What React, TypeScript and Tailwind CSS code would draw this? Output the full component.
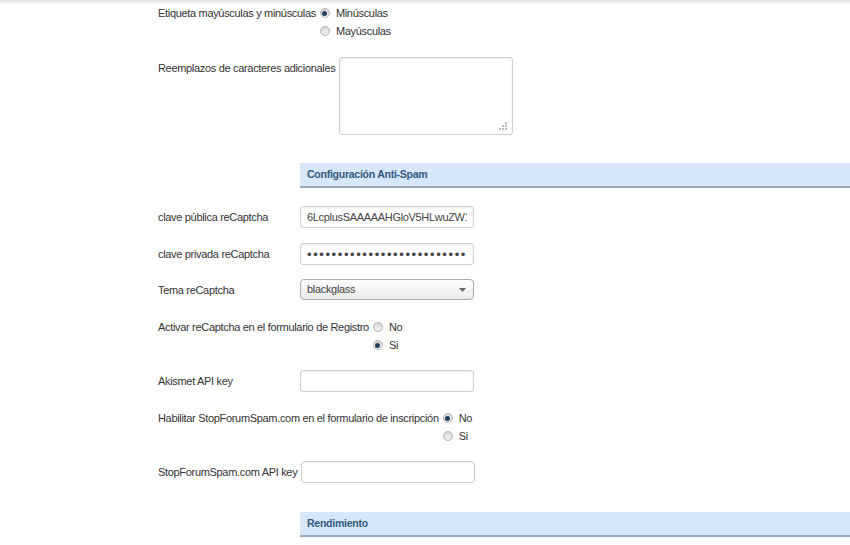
import React from "react";

const font = { fontFamily: '"Liberation Sans", Arial, sans-serif' };

const Radio = ({ checked, label }: { checked?: boolean; label: string }) => (
  <div className="flex h-[18px] items-center">
    <span className="flex h-[10px] w-[10px] items-center justify-center rounded-full border border-[#b3b3b3] bg-gradient-to-b from-[#d6d6d6] to-[#f3f3f3]">
      {checked && <span className="h-[5px] w-[5px] rounded-full bg-[#1f3f60]" />}
    </span>
    <span className="ml-[6px]">{label}</span>
  </div>
);

const Label = ({ children }: { children: React.ReactNode }) => (
  <span className="mr-[4px] min-w-[138px] whitespace-nowrap leading-[18px]">{children}</span>
);

const TextInput = ({ value, type = "text" }: { value?: string; type?: string }) => (
  <input
    type={type}
    readOnly
    defaultValue={value}
    className={
      "h-[22px] w-[174px] rounded-[3px] border border-[#cfcfcf] bg-white px-[6px] text-[#444] shadow-[inset_0_1px_2px_rgba(0,0,0,0.08)] outline-none " +
      (type === "password" ? "text-[13px] tracking-[1.6px]" : "text-[11px] tracking-[-0.32px]")
    }
  />
);

const SectionHeader = ({ title }: { title: string }) => (
  <div className="ml-[142px] flex h-[25px] items-center border-b-2 border-[#98a9bc] bg-[#d7e6f8] pl-[7px] text-[10.5px] font-bold tracking-[-0.25px] text-[#32587f]">
    {title}
  </div>
);

export default function App() {
  return (
    <div className="min-h-[545px] w-[850px] overflow-hidden bg-white text-[11px] tracking-[-0.32px] text-[#333]" style={font}>
      <div className="h-[4px] bg-gradient-to-b from-[#dedede] to-white" />
      <div className="pl-[158px]">
        {/* Etiqueta */}
        <div className="flex">
          <Label>Etiqueta mayúsculas y minúsculas</Label>
          <div className="flex flex-col">
            <Radio checked label="Minúsculas" />
            <Radio label="Mayúsculas" />
          </div>
        </div>

        {/* Reemplazos */}
        <div className="mt-[17px] flex">
          <span className="pt-[2px]">
            <Label>Reemplazos de caracteres adicionales</Label>
          </span>
          <div className="relative">
            <textarea
              readOnly
              className="block h-[78px] w-[174px] resize-none rounded-[3px] border border-[#cfcfcf] bg-white shadow-[inset_0_1px_2px_rgba(0,0,0,0.08)] outline-none"
            />
            <svg className="absolute bottom-[4px] right-[5px]" width="9" height="9" viewBox="0 0 9 9">
              <g fill="#b8b8b8">
                <rect x="6" y="0" width="2" height="2" />
                <rect x="3" y="3" width="2" height="2" />
                <rect x="6" y="3" width="2" height="2" />
                <rect x="0" y="6" width="2" height="2" />
                <rect x="3" y="6" width="2" height="2" />
                <rect x="6" y="6" width="2" height="2" />
              </g>
            </svg>
          </div>
        </div>

        <div className="mt-[28px]">
          <SectionHeader title="Configuración Anti-Spam" />
        </div>

        <div className="mt-[18px] flex items-center">
          <Label>clave pública reCaptcha</Label>
          <TextInput value="6LcplusSAAAAAHGloV5HLwuZW1cbTqK" />
        </div>

        <div className="mt-[15px] flex items-center">
          <Label>clave privada reCaptcha</Label>
          <TextInput type="password" value="xxxxxxxxxxxxxxxxxxxxxxxxxxxxxxxxxxxxxxxx" />
        </div>

        <div className="mt-[14px] flex items-center">
          <Label>Tema reCaptcha</Label>
          <div className="flex h-[21px] w-[174px] items-center justify-between rounded-[4px] border border-[#ababab] bg-gradient-to-b from-[#fdfdfd] to-[#ececec] pl-[6px] pr-[7px] text-[#444]">
            <span>blackglass</span>
            <svg width="7" height="4" viewBox="0 0 7 4">
              <path d="M0 0h7L3.5 4z" fill="#666" />
            </svg>
          </div>
        </div>

        <div className="mt-[18px] flex">
          <Label>Activar reCaptcha en el formulario de Registro</Label>
          <div className="flex flex-col">
            <Radio label="No" />
            <Radio checked label="Si" />
          </div>
        </div>

        <div className="mt-[16px] flex items-center">
          <Label>Akismet API key</Label>
          <TextInput />
        </div>

        <div className="mt-[17px] flex">
          <Label>Habilitar StopForumSpam.com en el formulario de inscripción</Label>
          <div className="flex flex-col">
            <Radio checked label="No" />
            <Radio label="Si" />
          </div>
        </div>

        <div className="mt-[16px] flex items-center">
          <Label>StopForumSpam.com API key</Label>
          <TextInput />
        </div>

        <div className="mt-[29px]">
          <SectionHeader title="Rendimiento" />
        </div>
      </div>
    </div>
  );
}
